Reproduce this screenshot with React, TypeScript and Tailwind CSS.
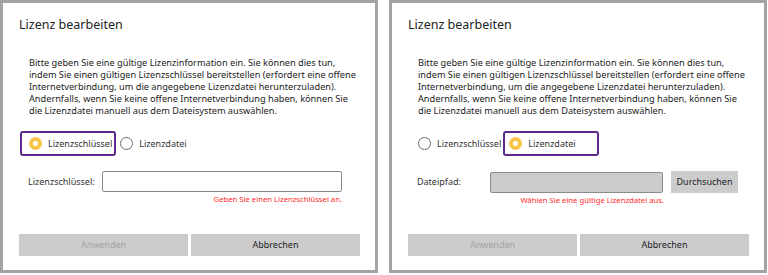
import React from 'react';

type Mode = 'key' | 'file';

const bodyLines = [
  'Bitte geben Sie eine gültige Lizenzinformation ein. Sie können dies tun,',
  'indem Sie einen gültigen Lizenzschlüssel bereitstellen (erfordert eine offene',
  'Internetverbindung, um die angegebene Lizenzdatei herunterzuladen).',
  'Andernfalls, wenn Sie keine offene Internetverbindung haben, können Sie',
  'die Lizenzdatei manuell aus dem Dateisystem auswählen.',
];

const Radio: React.FC<{ checked: boolean; label: string }> = ({ checked, label }) => (
  <div className="flex items-center">
    {checked ? (
      <span className="w-[13px] h-[13px] rounded-full bg-[#f7c548] flex items-center justify-center">
        <span className="w-[5px] h-[5px] rounded-full bg-white" />
      </span>
    ) : (
      <span className="w-[13px] h-[13px] rounded-full border border-[#6b6b6b] bg-white" />
    )}
    <span className="ml-[6px] text-[#333]">{label}</span>
  </div>
);

const LicenseDialog: React.FC<{ mode: Mode }> = ({ mode }) => {
  const isKey = mode === 'key';

  return (
    <div className="w-[378px] h-[273px] border-[3px] border-[#a3a3a3] bg-white flex flex-col">
      {/* Title */}
      <h1 className="pl-[16px] pt-[14px] text-[12.5px] leading-[16px] text-[#222]">Lizenz bearbeiten</h1>

      {/* Description */}
      <p className="pl-[26px] mt-[24px] text-[9.2px] leading-[12px] text-[#222]">
        {bodyLines.map((l, i) => (
          <span key={i} className="block whitespace-nowrap">{l}</span>
        ))}
      </p>

      {/* Radio row */}
      <div className="relative mt-[14px] h-[25px] pl-[26px] flex items-center gap-[8px] text-[9px]">
        <Radio checked={isKey} label="Lizenzschlüssel" />
        <Radio checked={!isKey} label="Lizenzdatei" />
        <div
          className={`absolute top-0 h-[25px] w-[96px] border-2 border-[#5b2a8c] rounded-[3px] ${
            isKey ? 'left-[17px]' : 'left-[111px]'
          }`}
        />
      </div>

      {/* Field row */}
      <div className="mt-[15px] pl-[25px] flex items-center text-[9px] text-[#333]">
        {isKey ? (
          <>
            <span className="w-[74px]">Lizenzschlüssel:</span>
            <div className="w-[240px] h-[21px] border border-[#8a8a8a] rounded-[2px] bg-white" />
          </>
        ) : (
          <>
            <span className="w-[73px]">Dateipfad:</span>
            <div className="w-[173px] h-[21px] border border-[#8a8a8a] rounded-[2px] bg-[#cccccc]" />
            <button className="ml-[8px] w-[67px] h-[22px] bg-[#cccccc] text-[9px] text-[#222]">Durchsuchen</button>
          </>
        )}
      </div>
      <div className={`flex ${isKey ? 'w-[339px]' : 'w-[272px]'} justify-end mt-[2px]`}>
        <span className="text-[7.7px] leading-[10px] text-[#ff2a2a]">
          {isKey ? 'Geben Sie einen Lizenzschlüssel an.' : 'Wählen Sie eine gültige Lizenzdatei aus.'}
        </span>
      </div>

      {/* Buttons */}
      <div className="mt-auto mb-[14px] pl-[16px] flex gap-[3px] text-[9px]">
        <button className="w-[169px] h-[22px] bg-[#cccccc] text-[#a3a3a3]">Anwenden</button>
        <button className="w-[169px] h-[22px] bg-[#cccccc] text-[#222]">Abbrechen</button>
      </div>
    </div>
  );
};

const App: React.FC = () => {
  return (
    <div className="w-[768px] h-[275px] bg-white flex gap-[11px] font-['Noto_Sans',sans-serif]">
      <LicenseDialog mode="key" />
      <LicenseDialog mode="file" />
    </div>
  );
};

export default App;
